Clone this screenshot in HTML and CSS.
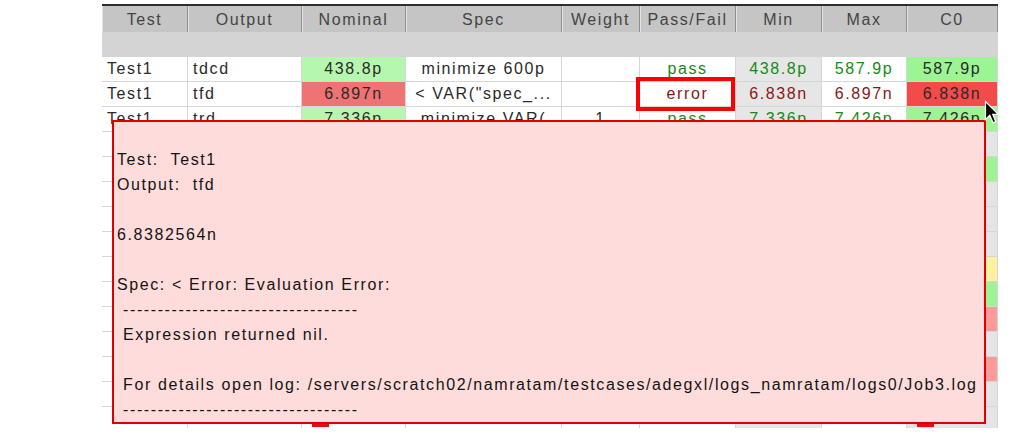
FILE: index.html
```html
<!DOCTYPE html>
<html>
<head>
<meta charset="utf-8">
<link rel="stylesheet" href="styles.css">
</head>
<body>
<div class="screen">
  <div class="table">
    <div class="cols hdr">
      <div class="hc">Test</div>
      <div class="hc">Output</div>
      <div class="hc">Nominal</div>
      <div class="hc">Spec</div>
      <div class="hc">Weight</div>
      <div class="hc">Pass/Fail</div>
      <div class="hc">Min</div>
      <div class="hc">Max</div>
      <div class="hc">C0</div>
    </div>
    <div class="band"></div>
    <div class="body">
      <div class="cols row">
        <div class="c l">Test1</div><div class="c l">tdcd</div><div class="c nom-g">438.8p</div><div class="c">minimize 600p</div><div class="c"></div><div class="c pass">pass</div><div class="c min pass">438.8p</div><div class="c pass">587.9p</div><div class="c c0-g">587.9p</div>
      </div>
      <div class="cols row">
        <div class="c l">Test1</div><div class="c l">tfd</div><div class="c nom-r">6.897n</div><div class="c">&lt; VAR("spec_...</div><div class="c"></div><div class="c err">error</div><div class="c min err">6.838n</div><div class="c err">6.897n</div><div class="c c0-r">6.838n</div>
      </div>
      <div class="cols row">
        <div class="c l">Test1</div><div class="c l">trd</div><div class="c nom-g">7.336p</div><div class="c">minimize VAR(</div><div class="c">1</div><div class="c pass">pass</div><div class="c min pass">7.336p</div><div class="c pass">7.426p</div><div class="c c0-g">7.426p</div>
      </div>
      <div class="cols row">
        <div class="c"></div><div class="c"></div><div class="c"></div><div class="c"></div><div class="c"></div><div class="c"></div><div class="c min"></div><div class="c"></div><div class="c c0-n"></div>
      </div>
      <div class="cols row">
        <div class="c"></div><div class="c"></div><div class="c nom-g"></div><div class="c"></div><div class="c"></div><div class="c"></div><div class="c min"></div><div class="c"></div><div class="c c0-g"></div>
      </div>
      <div class="cols row">
        <div class="c"></div><div class="c"></div><div class="c"></div><div class="c"></div><div class="c"></div><div class="c"></div><div class="c min"></div><div class="c"></div><div class="c c0-n"></div>
      </div>
      <div class="cols row">
        <div class="c"></div><div class="c"></div><div class="c"></div><div class="c"></div><div class="c"></div><div class="c"></div><div class="c min"></div><div class="c"></div><div class="c c0-n"></div>
      </div>
      <div class="cols row">
        <div class="c"></div><div class="c"></div><div class="c"></div><div class="c"></div><div class="c"></div><div class="c"></div><div class="c min"></div><div class="c"></div><div class="c c0-n"></div>
      </div>
      <div class="cols row">
        <div class="c"></div><div class="c"></div><div class="c nom-y"></div><div class="c"></div><div class="c"></div><div class="c"></div><div class="c min"></div><div class="c"></div><div class="c c0-y"></div>
      </div>
      <div class="cols row">
        <div class="c"></div><div class="c"></div><div class="c nom-g"></div><div class="c"></div><div class="c"></div><div class="c"></div><div class="c min"></div><div class="c"></div><div class="c c0-g"></div>
      </div>
      <div class="cols row">
        <div class="c"></div><div class="c"></div><div class="c nom-r"></div><div class="c"></div><div class="c"></div><div class="c"></div><div class="c min"></div><div class="c"></div><div class="c c0-p"></div>
      </div>
      <div class="cols row">
        <div class="c"></div><div class="c"></div><div class="c"></div><div class="c"></div><div class="c"></div><div class="c"></div><div class="c min"></div><div class="c"></div><div class="c c0-n"></div>
      </div>
      <div class="cols row">
        <div class="c"></div><div class="c"></div><div class="c nom-r"></div><div class="c"></div><div class="c"></div><div class="c"></div><div class="c min"></div><div class="c"></div><div class="c c0-p"></div>
      </div>
      <div class="cols row">
        <div class="c"></div><div class="c"></div><div class="c"></div><div class="c"></div><div class="c"></div><div class="c"></div><div class="c min"></div><div class="c"></div><div class="c c0-n"></div>
      </div>
      <div class="cols row">
        <div class="c"></div><div class="c"></div><div class="c"><span class="mark"></span></div><div class="c"></div><div class="c"></div><div class="c"></div><div class="c min"></div><div class="c"></div><div class="c c0-n"><span class="mark"></span></div>
      </div>
    </div>
  </div>

  <div class="tip">
    <div class="ln"></div>
    <div class="ln">Test:  Test1</div>
    <div class="ln">Output:  tfd</div>
    <div class="ln"></div>
    <div class="ln">6.8382564n</div>
    <div class="ln"></div>
    <div class="ln">Spec: &lt; Error: Evaluation Error:</div>
    <div class="ln"> ----------------------------------</div>
    <div class="ln"> Expression returned nil.</div>
    <div class="ln"></div>
    <div class="ln"> For details open log: /servers/scratch02/namratam/testcases/adegxl/logs_namratam/logs0/Job3.log</div>
    <div class="ln"> ----------------------------------</div>
  </div>

  <div class="annot"></div>

  <svg class="cursor" width="16" height="26" viewBox="0 0 16 26">
    <path d="M1.5 1.5 L1.5 19.5 L5.8 15.4 L9 22.8 L11.8 21.6 L8.7 14.4 L14.3 14.4 Z" fill="#000" stroke="#fff" stroke-width="1.2" stroke-linejoin="miter"/>
  </svg>
</div>
</body>
</html>
```

FILE: styles.css
```css
html, body {
  margin: 0;
  padding: 0;
  background: #ffffff;
}

body {
  font-family: "Liberation Sans", Arial, Helvetica, sans-serif;
}

.screen {
  position: relative;
  width: 1013px;
  height: 444px;
  overflow: hidden;
  box-sizing: border-box;
  padding: 4px 0 0 102px;
}

.table {
  width: 896px;
  border-top: 2px solid #2e2e2e;
}

.cols {
  display: grid;
  grid-template-columns: 86px 114px 104px 156px 78px 96px 86px 85px 91px;
}

.hdr {
  height: 26px;
  background: #c5c5c5;
}

.hc {
  box-sizing: border-box;
  height: 26px;
  padding-top: 2px;
  line-height: 24px;
  text-align: center;
  font-size: 16px;
  letter-spacing: 1.6px;
  color: #444444;
  border-right: 1px solid #8f8f8f;
  box-shadow: inset 1px 0 0 #e4e4e4;
  white-space: nowrap;
  overflow: hidden;
}

.band {
  height: 25px;
  background: #d4d4d4;
}

.body {
  height: 371px;
  overflow: hidden;
}

.row {
  height: 25px;
}

.c {
  box-sizing: border-box;
  height: 25px;
  border-right: 1px solid #d6d6d6;
  border-bottom: 1px solid #d6d6d6;
  line-height: 23px;
  font-size: 16px;
  letter-spacing: 1.6px;
  color: #2a2a2a;
  text-align: center;
  white-space: nowrap;
  overflow: hidden;
  padding: 0 2px;
  background: #ffffff;
}

.l {
  text-align: left;
  padding-left: 5px;
}

.min {
  background: #e6e6e6;
}

.pass {
  color: #158a15;
}

.err {
  color: #8c1515;
}

.nom-g {
  background: #b6f7af;
}

.nom-r {
  background: #f07373;
}

.nom-y {
  background: #fff3a6;
}

.c0-g {
  background: #9cf593;
}

.c0-r {
  background: #f34a4a;
}

.c0-y {
  background: #fff1a0;
}

.c0-p {
  background: #ff9a9a;
}

.c0-n {
  background: #e4e4e4;
}

.mark {
  display: block;
  width: 17px;
  height: 4px;
  margin: 16px 0 0 8px;
  background: #e01010;
}

.tip {
  position: absolute;
  left: 112px;
  top: 120px;
  width: 874px;
  height: 304px;
  box-sizing: border-box;
  border: 2px solid #dc0000;
  background: #ffdcdc;
  padding: 0 0 0 3px;
  font-size: 16px;
  letter-spacing: 1.6px;
  color: #141414;
}

.ln {
  height: 25px;
  line-height: 25px;
  white-space: pre;
}

.annot {
  position: absolute;
  left: 636px;
  top: 77px;
  width: 99px;
  height: 34px;
  box-sizing: border-box;
  border: 4px solid #ff0000;
}

.cursor {
  position: absolute;
  left: 984px;
  top: 100px;
}
```
